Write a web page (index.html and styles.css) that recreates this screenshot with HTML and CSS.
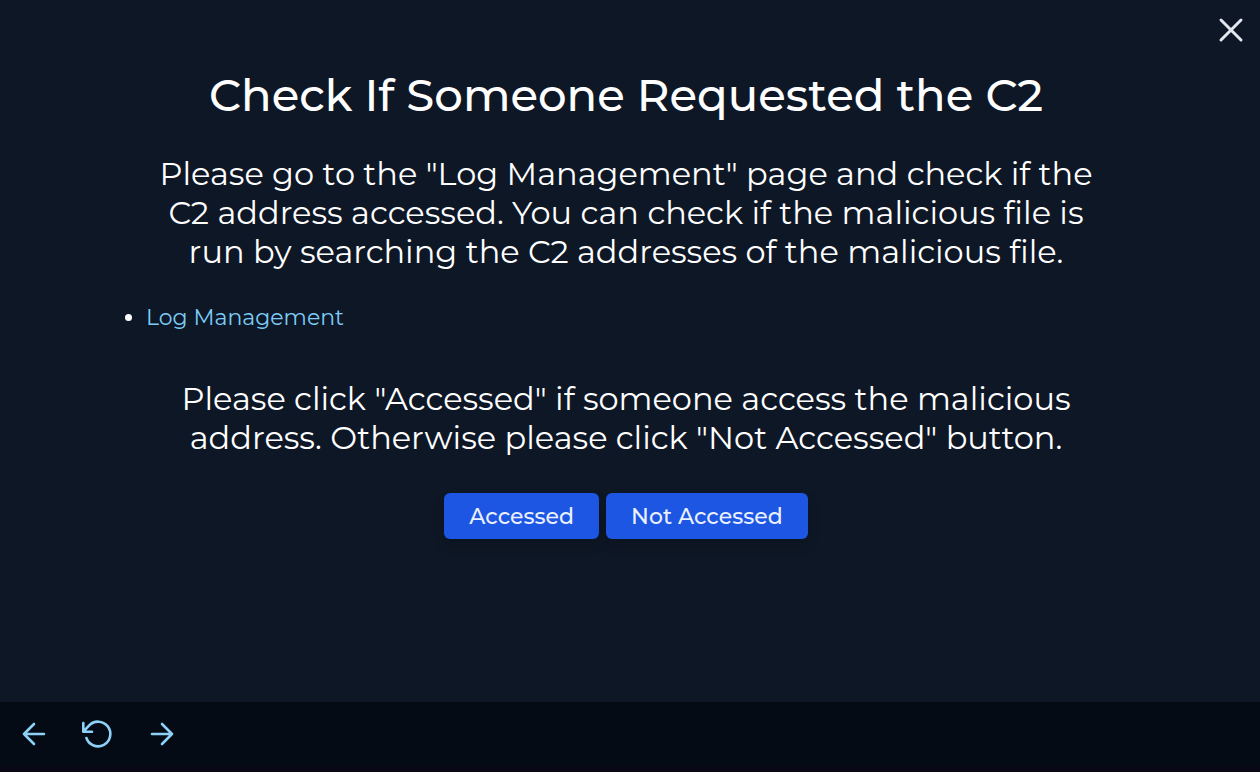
FILE: index.html
```
<!DOCTYPE html>
<html lang="en">
<head>
    <meta charset="UTF-8">
    <meta name="viewport" content="width=device-width, initial-scale=1">
    <title>Check If Someone Requested the C2</title>
    <link rel="stylesheet" href="styles.css">
</head>
<body>
    <button class="icon-button close" type="button" aria-label="Close">
        <svg width="24" height="24" viewBox="0 0 24 24"><path d="M2 2l20 20M22 2L2 22"/></svg>
    </button>

    <main class="content">
        <h1>Check If Someone Requested the C2</h1>
        <p>Please go to the "Log Management" page and check if the
            C2 address accessed. You can check if the malicious file is
            run by searching the C2 addresses of the malicious file.</p>
        <ul class="links">
            <li><a href="#">Log Management</a></li>
        </ul>
        <p>Please click "Accessed" if someone access the malicious
            address. Otherwise please click "Not Accessed" button.</p>
        <div class="answers">
            <button class="answer" type="button">Accessed</button>
            <button class="answer" type="button">Not Accessed</button>
        </div>
    </main>

    <footer class="toolbar">
        <button class="icon-button" type="button" aria-label="Previous">
            <svg width="32" height="32" viewBox="0 0 32 32"><path d="M26 16H6M16 6L6 16l10 10"/></svg>
        </button>
        <button class="icon-button" type="button" aria-label="Restart">
            <svg width="32" height="32" viewBox="0 0 32 32"><path d="M1.300 5v8.700H10M1.300 13.700L7 7.600A12.300 12.300 0 1 1 4.400 20"/></svg>
        </button>
        <button class="icon-button" type="button" aria-label="Next">
            <svg width="32" height="32" viewBox="0 0 32 32"><path d="M6 16h20M16 6l10 10-10 10"/></svg>
        </button>
    </footer>
</body>
</html>
```
FILE: styles.css
```
* {
    box-sizing: border-box;
}
body {
    display: flex;
    flex-direction: column;
    min-height: 100vh;
    margin: 0;
    background-color: #0e1725;
    color: white;
    font-family: Montserrat, Inter, sans-serif;
}
.icon-button {
    display: flex;
    padding: 0;
    border: none;
    background: none;
    color: #8ed1f6;
    cursor: pointer;
}
.icon-button svg {
    fill: none;
    stroke: currentColor;
    stroke-width: 2.6;
    stroke-linecap: round;
    stroke-linejoin: round;
    overflow: visible;
}
.close {
    position: absolute;
    top: 18px;
    right: 17px;
    color: #e2e8f0;
}
.close svg {
    stroke-width: 3;
}
.content {
    flex: 1;
    width: 100%;
    max-width: 1064px;
    margin: 0 auto;
    padding: 68px 20px 0 12px;
    text-align: center;
}
h1 {
    margin: 0 0 32px;
    font-size: 45px;
    font-weight: 500;
    line-height: 54px;
}
p {
    max-width: 960px;
    margin: 0 auto;
    font-size: 32px;
    line-height: 39px;
}
.links {
    margin: 32px 0 46px;
    padding-left: 36px;
    font-size: 22px;
    line-height: 30px;
    text-align: left;
}
.links a {
    color: #7dcdf8;
    text-decoration: none;
}
.answers {
    display: flex;
    justify-content: center;
    gap: 7px;
    margin-top: 36px;
}
.answer {
    height: 46px;
    padding: 0 25px;
    border: none;
    border-radius: 6px;
    background-color: #1c56e3;
    box-shadow: 0 6px 12px rgba(0, 0, 0, 0.15);
    color: #e9f0ff;
    font-family: inherit;
    font-size: 22px;
    font-weight: 500;
    cursor: pointer;
}
.toolbar {
    display: flex;
    gap: 32px;
    height: 70px;
    padding: 16px 18px;
    background: linear-gradient(to top, #0a0615, #040b15 8px);
}
```
